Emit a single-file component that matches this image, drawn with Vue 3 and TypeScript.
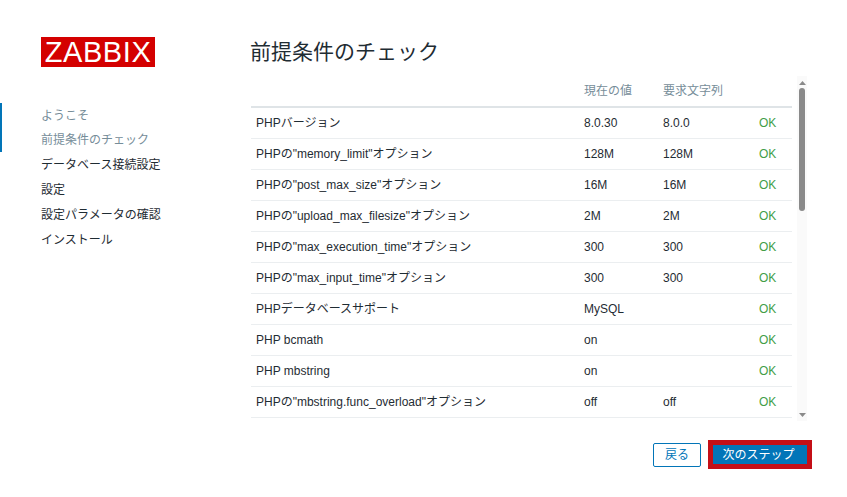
<script setup lang="ts">
interface Row { name: string; current: string; required: string }
const steps: string[] = ['ようこそ', '前提条件のチェック', 'データベース接続設定', '設定', '設定パラメータの確認', 'インストール']
const rows: Row[] = [
  { name: 'PHPバージョン', current: '8.0.30', required: '8.0.0' },
  { name: 'PHPの"memory_limit"オプション', current: '128M', required: '128M' },
  { name: 'PHPの"post_max_size"オプション', current: '16M', required: '16M' },
  { name: 'PHPの"upload_max_filesize"オプション', current: '2M', required: '2M' },
  { name: 'PHPの"max_execution_time"オプション', current: '300', required: '300' },
  { name: 'PHPの"max_input_time"オプション', current: '300', required: '300' },
  { name: 'PHPデータベースサポート', current: 'MySQL', required: '' },
  { name: 'PHP bcmath', current: 'on', required: '' },
  { name: 'PHP mbstring', current: 'on', required: '' },
  { name: 'PHPの"mbstring.func_overload"オプション', current: 'off', required: 'off' },
]
</script>

<template>
  <div class="page">
    <aside class="side">
      <div class="logo">ZABBIX</div>
      <ul class="steps">
        <li v-for="(s, i) in steps" :key="s" :class="{ done: i < 2 }">{{ s }}</li>
      </ul>
    </aside>
    <main class="main">
      <h1 class="title">前提条件のチェック</h1>
      <div class="panel">
        <div class="scroll">
          <div class="row head">
            <div class="c-name"></div>
            <div class="c-cur">現在の値</div>
            <div class="c-req">要求文字列</div>
            <div class="c-ok"></div>
          </div>
          <div v-for="r in rows" :key="r.name" class="row">
            <div class="c-name">{{ r.name }}</div>
            <div class="c-cur">{{ r.current }}</div>
            <div class="c-req">{{ r.required }}</div>
            <div class="c-ok ok">OK</div>
          </div>
        </div>
        <div class="bar">
          <svg class="arrow" width="7" height="4" viewBox="0 0 7 4"><path d="M3.5 0L7 4H0z" fill="#8a8a8a" /></svg>
          <div class="track"><div class="thumb"></div></div>
          <svg class="arrow" width="7" height="4" viewBox="0 0 7 4"><path d="M0 0H7L3.5 4z" fill="#8a8a8a" /></svg>
        </div>
      </div>
      <div class="actions">
        <button class="btn back" type="button">戻る</button>
        <div class="hl"><button class="btn next" type="button">次のステップ</button></div>
      </div>
    </main>
  </div>
</template>

<style scoped>
.page {
  width: 847px;
  height: 497px;
  display: flex;
  box-sizing: border-box;
  background: #fff;
  overflow: hidden;
  font-family: "Liberation Sans", "Noto Sans CJK JP", sans-serif;
  font-size: 12px;
  line-height: 16px;
  color: #1f2c33;
}
.side { width: 251px; flex: none; padding-top: 37px; box-sizing: border-box; }
.logo {
  margin-left: 41px;
  width: 114px;
  height: 30px;
  background: #d40000;
  color: #fff;
  font-size: 29px;
  line-height: 30px;
  text-align: center;
  letter-spacing: 0.6px;
}
.steps {
  list-style: none;
  margin: 36.55px 0 0;
  padding: 0 0 0 41px;
  position: relative;
}
.steps::before {
  content: "";
  position: absolute;
  left: 0;
  top: -1px;
  width: 2px;
  height: 49px;
  background: #0275b8;
}
.steps li { height: 24.9px; line-height: 24.9px; white-space: nowrap; }
.done { color: #768d99; }
.main { flex: none; width: 596px; padding-top: 37px; box-sizing: border-box; }
.title { margin: 0 0 0 -1px; font-size: 21px; font-weight: 400; line-height: 30px; }
.panel { margin-top: 13px; height: 340px; display: flex; width: 556px; }
.scroll { width: 541px; height: 340px; overflow: hidden; flex: none; }
.row { display: flex; height: 31px; box-sizing: border-box; border-bottom: 1px solid #ebeef0; align-items: center; padding-left: 5px; }
.head { height: 28px; border-bottom: 2px solid #dfe4e7; color: #768d99; align-items: flex-start; padding-top: 3px; }
.c-name { width: 328px; flex: none; white-space: nowrap; }
.c-cur { width: 79px; flex: none; }
.c-req { width: 96px; flex: none; }
.c-ok { flex: none; }
.ok { color: #429e47; }
.bar { width: 10px; margin: -4px 0 0 5px; flex: none; background: #fafafa; display: flex; flex-direction: column; align-items: center; padding: 5px 0 4px; box-sizing: border-box; height: 345px; }
.arrow { flex: none; }
.track { flex: 1; width: 100%; display: flex; justify-content: center; padding-top: 3px; box-sizing: border-box; }
.thumb { width: 6px; height: 123px; background: #8a8a8a; border-radius: 3px; }
.actions { display: flex; justify-content: flex-end; align-items: center; margin-top: 20px; padding-right: 35px; gap: 7px; }
.btn { font: inherit; padding: 0; box-sizing: border-box; }
.back { width: 48px; height: 24px; border: 1px solid #0275b8; border-radius: 2px; background: #fff; color: #0275b8; }
.hl { border: 5px solid #c40f17; }
.next { display: block; width: 94px; height: 19px; border: 0; padding-right: 3px; background: #0275b8; color: #fff; }
</style>
